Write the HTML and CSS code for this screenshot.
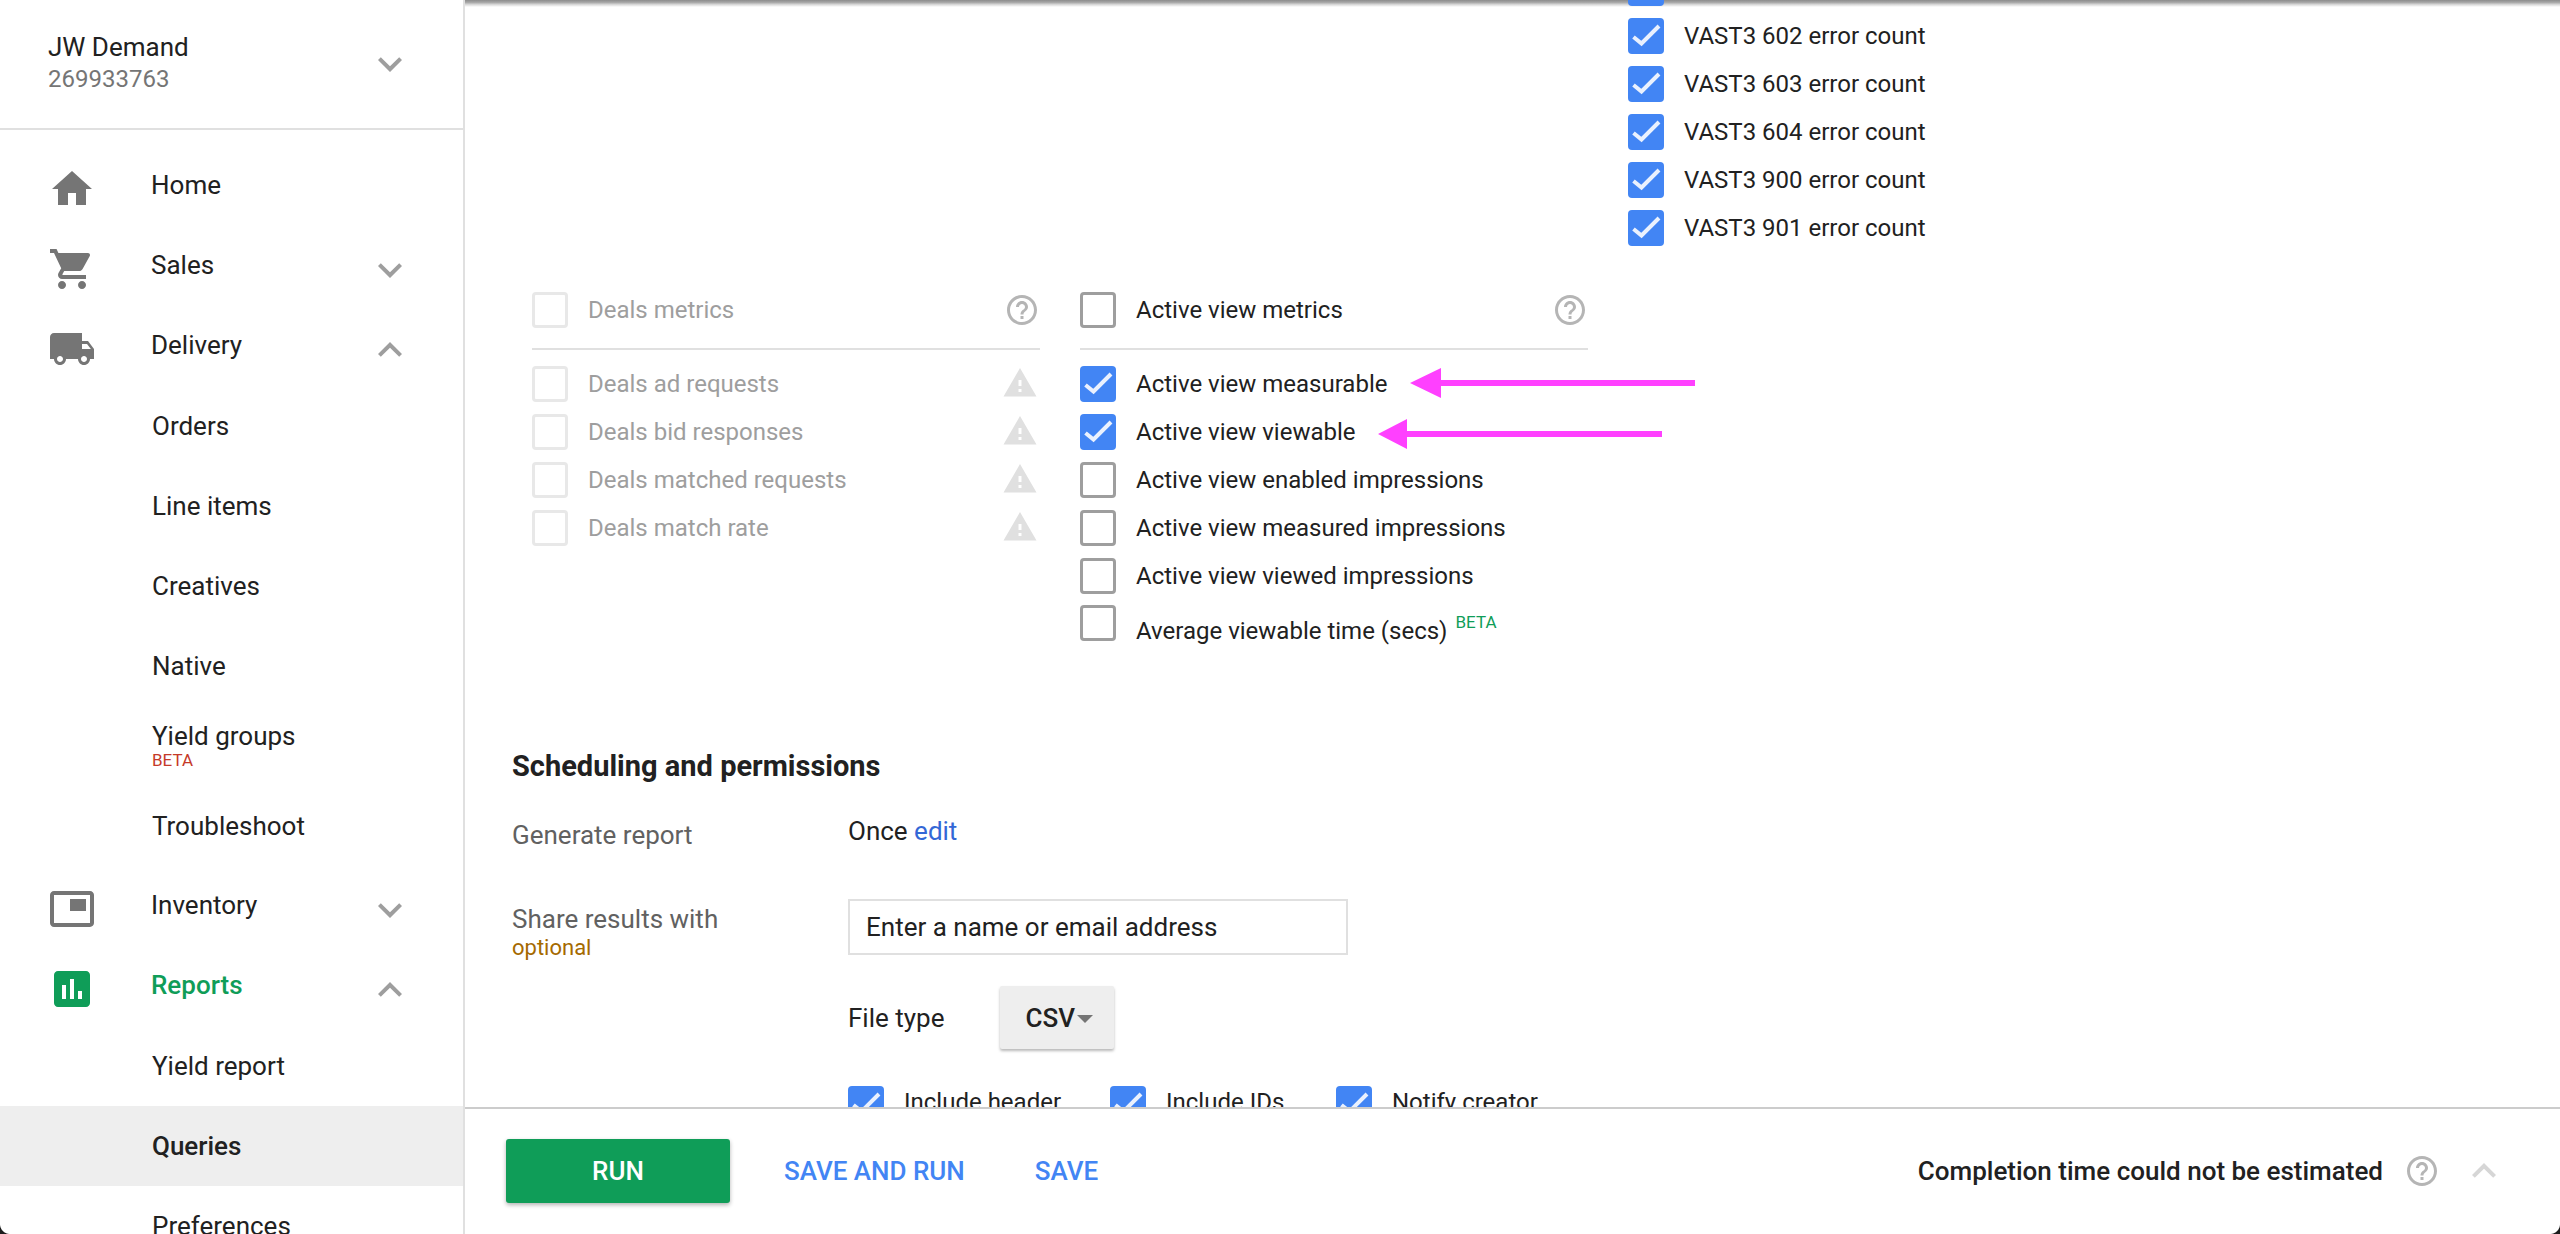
FILE: index.html
```html
<!DOCTYPE html>
<html lang="en">
<head>
<meta charset="utf-8">
<title>Queries</title>
<link rel="stylesheet" href="styles.css">
</head>
<body>
<svg class="defs" width="0" height="0" aria-hidden="true">
  <symbol id="i-more" viewBox="0 0 24 24"><path d="M16.59 8.59L12 13.17 7.41 8.59 6 10l6 6 6-6z"/></symbol>
  <symbol id="i-less" viewBox="0 0 24 24"><path d="M12 8l-6 6 1.41 1.41L12 10.83l4.59 4.58L18 14z"/></symbol>
  <symbol id="i-help" viewBox="0 0 24 24"><path d="M11 18h2v-2h-2v2zm1-16C6.48 2 2 6.48 2 12s4.48 10 10 10 10-4.48 10-10S17.52 2 12 2zm0 18c-4.41 0-8-3.59-8-8s3.59-8 8-8 8 3.59 8 8-3.59 8-8 8zm0-14c-2.21 0-4 1.79-4 4h2c0-1.1.9-2 2-2s2 .9 2 2c0 2-3 1.75-3 5h2c0-2.25 3-2.5 3-5 0-2.21-1.79-4-4-4z"/></symbol>
  <symbol id="i-warn" viewBox="0 0 24 24"><path d="M1 21h22L12 2 1 21zm12-3h-2v-2h2v2zm0-4h-2v-4h2v4z"/></symbol>
  <symbol id="i-check" viewBox="0 0 36 36"><path d="M5.5 19l8 6.5L31 8" fill="none" stroke="#eaf1fe" stroke-width="4"/></symbol>
</svg>

<aside class="side">
  <div class="account">
    <div class="account-text">
      <div class="account-name">JW Demand</div>
      <div class="account-id">269933763</div>
    </div>
    <svg class="chev"><use href="#i-more"/></svg>
  </div>
  <nav class="nav">
    <div class="nav-row"><svg class="nav-icon" viewBox="0 0 24 24"><path d="M10 20v-6h4v6h5v-8h3L12 3 2 12h3v8z"/></svg><span class="nav-label">Home</span></div>
    <div class="nav-row"><svg class="nav-icon" viewBox="0 0 24 24"><path d="M7 18c-1.1 0-1.99.9-1.99 2S5.9 22 7 22s2-.9 2-2-.9-2-2-2zM1 2v2h2l3.6 7.59-1.35 2.45c-.16.28-.25.61-.25.96 0 1.1.9 2 2 2h12v-2H7.42c-.14 0-.25-.11-.25-.25l.03-.12.9-1.63h7.45c.75 0 1.41-.41 1.75-1.03l3.58-6.49c.08-.14.12-.31.12-.48 0-.55-.45-1-1-1H5.21l-.94-2H1zm16 16c-1.1 0-1.99.9-1.99 2s.89 2 1.99 2 2-.9 2-2-.9-2-2-2z"/></svg><span class="nav-label">Sales</span><svg class="chev"><use href="#i-more"/></svg></div>
    <div class="nav-row"><svg class="nav-icon" viewBox="0 0 24 24"><path d="M20 8h-3V4H3c-1.1 0-2 .9-2 2v11h2c0 1.66 1.34 3 3 3s3-1.34 3-3h6c0 1.66 1.34 3 3 3s3-1.34 3-3h2v-5l-3-4zM6 18.5c-.83 0-1.5-.67-1.5-1.5s.67-1.5 1.5-1.5 1.5.67 1.5 1.5-.67 1.5-1.5 1.5zm13.5-9l1.96 2.5H17V9.5h2.5zm-1.5 9c-.83 0-1.5-.67-1.5-1.5s.67-1.5 1.5-1.5 1.5.67 1.5 1.5-.67 1.5-1.5 1.5z"/></svg><span class="nav-label">Delivery</span><svg class="chev"><use href="#i-less"/></svg></div>
    <div class="nav-row sub"><span class="nav-label">Orders</span></div>
    <div class="nav-row sub"><span class="nav-label">Line items</span></div>
    <div class="nav-row sub"><span class="nav-label">Creatives</span></div>
    <div class="nav-row sub"><span class="nav-label">Native</span></div>
    <div class="nav-row sub"><span class="nav-label stacked">Yield groups<span class="beta-red">BETA</span></span></div>
    <div class="nav-row sub"><span class="nav-label">Troubleshoot</span></div>
    <div class="nav-row"><svg class="nav-icon" viewBox="0 0 24 24"><path d="M19 7h-8v6h8V7zm2-4H3c-1.1 0-2 .9-2 2v14c0 1.1.9 2 2 2h18c1.1 0 2-.98 2-1.98V5c0-1.1-.9-2-2-2zm0 16.01H3V4.98h18v14.03z"/></svg><span class="nav-label">Inventory</span><svg class="chev"><use href="#i-more"/></svg></div>
    <div class="nav-row active"><svg class="nav-icon" viewBox="0 0 24 24"><path d="M19 3H5c-1.1 0-2 .9-2 2v14c0 1.1.9 2 2 2h14c1.1 0 2-.9 2-2V5c0-1.1-.9-2-2-2zM9 17H7v-7h2v7zm4 0h-2V7h2v10zm4 0h-2v-4h2v4z"/></svg><span class="nav-label">Reports</span><svg class="chev"><use href="#i-less"/></svg></div>
    <div class="nav-row sub"><span class="nav-label">Yield report</span></div>
    <div class="nav-row sub current"><span class="nav-label">Queries</span></div>
    <div class="nav-row sub"><span class="nav-label">Preferences</span></div>
  </nav>
</aside>

<main class="main">
  <div class="content">
    <div class="metrics">
      <div class="vast">
        <div class="row"><span class="box on"><svg><use href="#i-check"/></svg></span><span class="lab">VAST3 601 error count</span></div>
        <div class="row"><span class="box on"><svg><use href="#i-check"/></svg></span><span class="lab">VAST3 602 error count</span></div>
        <div class="row"><span class="box on"><svg><use href="#i-check"/></svg></span><span class="lab">VAST3 603 error count</span></div>
        <div class="row"><span class="box on"><svg><use href="#i-check"/></svg></span><span class="lab">VAST3 604 error count</span></div>
        <div class="row"><span class="box on"><svg><use href="#i-check"/></svg></span><span class="lab">VAST3 900 error count</span></div>
        <div class="row"><span class="box on"><svg><use href="#i-check"/></svg></span><span class="lab">VAST3 901 error count</span></div>
      </div>

      <div class="group disabled">
        <div class="row head"><span class="box"></span><span class="lab">Deals metrics</span><svg class="help"><use href="#i-help"/></svg></div>
        <div class="row"><span class="box"></span><span class="lab">Deals ad requests</span><svg class="warn"><use href="#i-warn"/></svg></div>
        <div class="row"><span class="box"></span><span class="lab">Deals bid responses</span><svg class="warn"><use href="#i-warn"/></svg></div>
        <div class="row"><span class="box"></span><span class="lab">Deals matched requests</span><svg class="warn"><use href="#i-warn"/></svg></div>
        <div class="row"><span class="box"></span><span class="lab">Deals match rate</span><svg class="warn"><use href="#i-warn"/></svg></div>
      </div>

      <div class="group">
        <div class="row head"><span class="box"></span><span class="lab">Active view metrics</span><svg class="help"><use href="#i-help"/></svg></div>
        <div class="row"><span class="box on"><svg><use href="#i-check"/></svg></span><span class="lab">Active view measurable</span></div>
        <div class="row"><span class="box on"><svg><use href="#i-check"/></svg></span><span class="lab">Active view viewable</span></div>
        <div class="row"><span class="box"></span><span class="lab">Active view enabled impressions</span></div>
        <div class="row"><span class="box"></span><span class="lab">Active view measured impressions</span></div>
        <div class="row"><span class="box"></span><span class="lab">Active view viewed impressions</span></div>
        <div class="row last"><span class="box"></span><span class="lab">Average viewable time (secs)<sup class="beta-green">BETA</sup></span></div>
      </div>
    </div>

    <section class="sched">
      <h2 class="sched-title">Scheduling and permissions</h2>
      <div class="form-row gen">
        <div class="form-key">Generate report</div>
        <div class="form-val">Once <a class="link">edit</a></div>
      </div>
      <div class="form-row share">
        <div class="form-key">Share results with<span class="optional">optional</span></div>
        <div class="form-val">
          <div class="input">Enter a name or email address</div>
          <div class="file-row"><span>File type</span><span class="dropdown">CSV<i class="caret"></i></span></div>
          <div class="opts">
            <div class="opt first"><span class="box on"><svg><use href="#i-check"/></svg></span><span class="lab">Include header</span></div>
            <div class="opt second"><span class="box on"><svg><use href="#i-check"/></svg></span><span class="lab">Include IDs</span></div>
            <div class="opt"><span class="box on"><svg><use href="#i-check"/></svg></span><span class="lab">Notify creator</span></div>
          </div>
        </div>
      </div>
    </section>
  </div>

  <footer class="foot">
    <button class="run">RUN</button>
    <a class="action first-action">SAVE AND RUN</a>
    <a class="action">SAVE</a>
    <div class="estimate">Completion time could not be estimated</div>
    <svg class="foot-help"><use href="#i-help"/></svg>
    <svg class="foot-chev"><use href="#i-less"/></svg>
  </footer>

  <div class="top-shadow"></div>

  <svg class="arrow arrow-a" viewBox="0 0 285 30"><path d="M0 15L31 0v12h254v6H31v12z"/></svg>
  <svg class="arrow arrow-b" viewBox="0 0 284 30"><path d="M0 15L29 0v12h255v6H29v12z"/></svg>
</main>

<div class="corner corner-l"></div>
<div class="corner corner-r"></div>
</body>
</html>
```

FILE: styles.css
```css
* { box-sizing: border-box; }
html, body { margin: 0; height: 100%; }
body {
  display: flex;
  height: 1234px;
  overflow: hidden;
  position: relative;
  font-family: Roboto, "Liberation Sans", sans-serif;
  font-size: 24px;
  color: #212121;
  background: #fff;
}
.defs { position: absolute; }

/* Sidebar */
.side {
  width: 465px;
  flex: none;
  height: 1234px;
  overflow: hidden;
  border-right: 2px solid #e0e0e0;
}
.account {
  height: 130px;
  display: flex;
  align-items: center;
  padding-left: 48px;
  border-bottom: 2px solid #e0e0e0;
}
.account-text { flex: 1; margin-top: -2px; }
.account-name { font-size: 26px; line-height: 32px; }
.account-id { font-size: 24px; line-height: 32px; color: #757575; }
.chev {
  width: 48px;
  height: 48px;
  flex: none;
  fill: #9e9e9e;
  margin: 8px 49px 0 0;
}
.account .chev { margin-top: 0; }
.nav { padding-top: 16px; }
.nav-row {
  height: 80px;
  display: flex;
  align-items: center;
  padding-left: 48px;
  flex: none;
}
.nav-icon {
  width: 48px;
  height: 48px;
  flex: none;
  fill: #757575;
  margin: 6px 55px 0 0;
}
.nav-label { flex: 1; font-size: 26px; margin-top: -2px; }
.nav-row.sub { padding-left: 152px; }
.nav-row.sub .nav-label { margin-top: 0; }
.nav-row.active .nav-icon { fill: #0f9d58; }
.nav-row.active .nav-label { color: #0f9d58; font-weight: 500; }
.nav-row.current { background: #eee; }
.nav-row.current .nav-label { font-weight: 500; }
.nav-row.sub .stacked { display: flex; flex-direction: column; line-height: 30px; margin-top: -2px; }
.beta-red { font-size: 17px; line-height: 17px; color: #c53929; margin-top: 1px; }

/* Main */
.main {
  flex: 1;
  min-width: 0;
  display: flex;
  flex-direction: column;
  position: relative;
  height: 1234px;
}
.content {
  height: 1107px;
  flex: none;
  overflow: hidden;
  position: relative;
  z-index: 1;
}
.metrics {
  display: grid;
  grid-template-columns: repeat(3, 508px);
  column-gap: 40px;
  row-gap: 34px;
  margin: -36px 0 0 67px;
  align-items: start;
}
.vast { grid-column: 3; grid-row: 1; }
.group { grid-row: 2; }
.row {
  height: 48px;
  display: flex;
  align-items: center;
}
.box {
  width: 36px;
  height: 36px;
  flex: none;
  border: 3px solid #9e9e9e;
  border-radius: 4px;
  background: #fff;
}
.box.on { border: 0; background: #4285f4; }
.box svg { width: 36px; height: 36px; display: block; }
.lab { margin-left: 20px; flex: 1; white-space: nowrap; }
.row.head {
  height: 64px;
  padding-bottom: 14px;
  border-bottom: 2px solid #e0e0e0;
  margin-bottom: 10px;
}
.help { width: 36px; height: 36px; flex: none; fill: #b5b5b5; }
.warn { width: 36px; height: 36px; flex: none; fill: #e0e0e0; margin: -3px 2px 0 0; }
.group.disabled .box { border-color: #e8e8e8; }
.group.disabled .lab { color: #9e9e9e; }
.row.last { height: 60px; align-items: flex-start; padding-top: 5px; }
.row.last .lab { margin-top: 12px; }
.beta-green {
  font-size: 17px;
  color: #0f9d58;
  margin-left: 8px;
  position: relative;
  top: -2px;
  line-height: 0;
}

/* Scheduling */
.sched { padding: 0 0 0 47px; margin-top: 88px; }
.sched-title { margin: 0; font-size: 29px; line-height: 36px; font-weight: 700; }
.form-row { display: flex; font-size: 26px; }
.form-key { width: 336px; flex: none; color: #616161; line-height: 32px; }
.gen { margin-top: 32px; }
.gen .form-key { margin-top: 3px; }
.share { margin-top: 48px; }
.share .form-key { margin-top: 4px; }
.optional { display: block; font-size: 22px; line-height: 26px; color: #a56a00; }
.link { color: #3367d6; }
.input {
  width: 500px;
  height: 56px;
  border: 2px solid #e0e0e0;
  padding-left: 16px;
  line-height: 52px;
}
.file-row { display: flex; align-items: center; margin-top: 31px; gap: 56px; }
.dropdown {
  width: 114px;
  height: 63px;
  background: #eee;
  border-radius: 2px;
  box-shadow: 0 2px 3px rgba(0,0,0,.28);
  display: flex;
  align-items: center;
  padding-left: 25px;
  font-weight: 500;
}
.caret {
  width: 0;
  height: 0;
  margin-left: 2px;
  margin-top: 3px;
  border-left: 8px solid transparent;
  border-right: 8px solid transparent;
  border-top: 8px solid #757575;
}
.opts { display: flex; margin-top: 37px; }
.opt { display: flex; align-items: flex-start; font-size: 24px; }
.opt.first { width: 262px; }
.opt.second { width: 226px; }
.opt .lab { margin-top: 2px; flex: none; }

/* Footer */
.foot {
  height: 127px;
  flex: none;
  border-top: 2px solid #ccc;
  display: flex;
  align-items: center;
  padding: 0 52px 2px 41px;
}
.run {
  width: 224px;
  height: 64px;
  border: 0;
  border-radius: 3px;
  background: #0f9d58;
  color: #fff;
  font: 500 26px Roboto, sans-serif;
  box-shadow: 0 2px 4px rgba(0,0,0,.3);
}
.action { color: #4285f4; font-weight: 500; font-size: 26px; }
.first-action { margin: 0 70px 0 54px; }
.estimate { margin-left: auto; font-weight: 500; font-size: 26px; }
.foot-help { width: 36px; height: 36px; fill: #b5b5b5; margin-left: 21px; flex: none; }
.foot-chev { width: 48px; height: 48px; fill: #d6d6d6; margin-left: 20px; flex: none; }

/* Overlays */
.top-shadow {
  position: absolute;
  left: 0;
  right: 0;
  top: 0;
  height: 7px;
  background: linear-gradient(#8c8c8c, #a8a8a8 35%, #d8d8d8 65%, rgba(255,255,255,0));
}
.arrow { position: absolute; fill: #ff40ff; height: 30px; z-index: 2; }
.arrow-a { left: 945px; top: 368px; width: 285px; }
.arrow-b { left: 913px; top: 419px; width: 284px; }
.corner { position: absolute; bottom: 0; width: 10px; height: 10px; z-index: 3; }
.corner-l { left: 0; background: radial-gradient(circle at 10px 0, transparent 9.5px, #1c1c1c 10.5px); }
.corner-r { right: 0; background: radial-gradient(circle at 0 0, transparent 9.5px, #1c1c1c 10.5px); }
```
